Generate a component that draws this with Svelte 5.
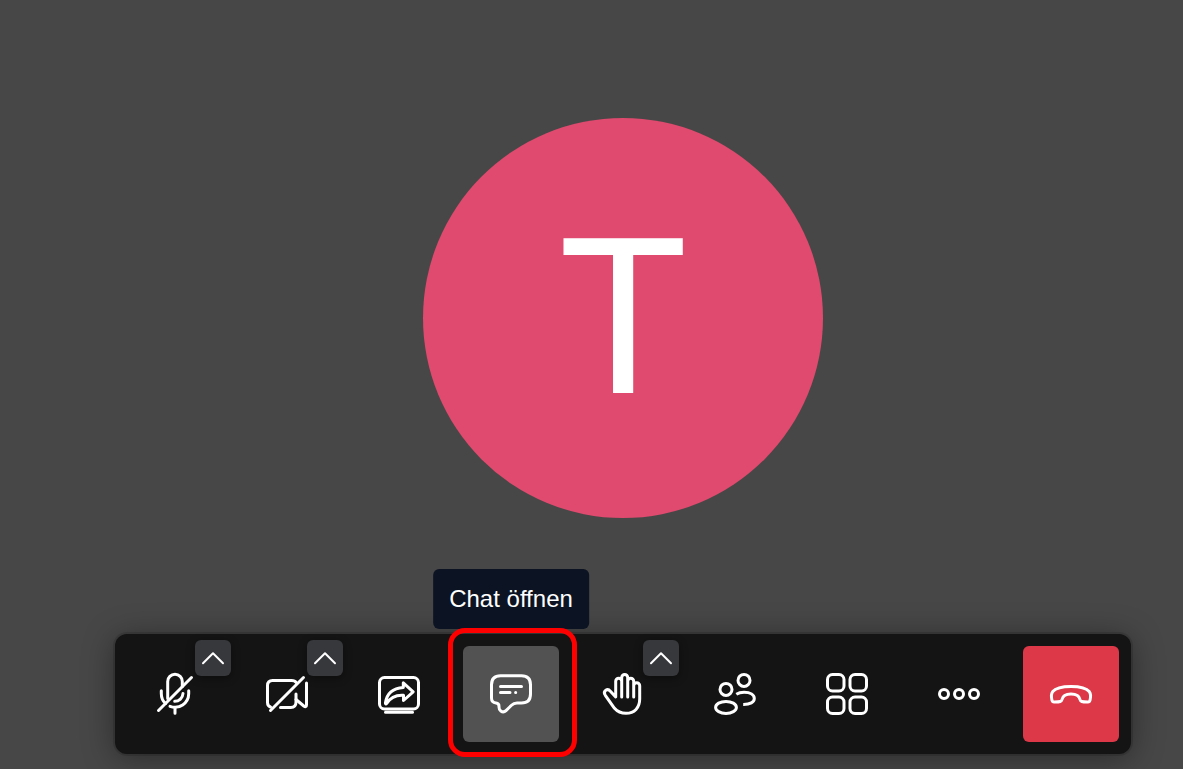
<script>
  const controls = [
    { id: 'mic', label: 'Mikrofon', menu: true },
    { id: 'camera', label: 'Kamera', menu: true },
    { id: 'share', label: 'Bildschirm teilen' },
    { id: 'chat', label: 'Chat öffnen', active: true },
    { id: 'hand', label: 'Hand heben', menu: true },
    { id: 'people', label: 'Teilnehmer' },
    { id: 'grid', label: 'Ansicht' },
    { id: 'more', label: 'Mehr' },
    { id: 'hangup', label: 'Auflegen', danger: true }
  ];
</script>

<main class="call">
  <section class="stage">
    <div class="avatar">T</div>
  </section>

  <nav class="toolbar">
    {#each controls as c (c.id)}
      <div class="slot">
        <button class="control" class:active={c.active} class:danger={c.danger} aria-label={c.label}>
          <svg class="icon" viewBox="0 0 48 48" aria-hidden="true">
            {#if c.id === 'mic'}
              <path d="M16.700 28.500V11.500a7.300 7.300 0 0 1 14.600 0V16.500" />
              <path d="M32 23.500a8.300 8.300 0 0 1-8.300 7.800" />
              <path d="M10.300 20.800v2.700c0 4.200 1.600 7.800 4.300 10" />
              <path d="M37.700 20.800v2.900A13.700 13.700 0 0 1 19 36.300" />
              <path d="M24 38v5.300M7.500 40.500 40.500 7.500" />
            {:else if c.id === 'camera'}
              <path d="M7.500 37C5.500 36.300 4.500 34.700 4.500 32.500V15.500c0-3.500 1.700-5.100 5.100-5.100h19c2.400 0 3.700.7 4.500 2.100" />
              <path d="M33 24v8c0 3.800-1.500 5.400-5.200 5.400H17.500" />
              <path d="M33 29.500 40.800 36c1.500 1.100 2.700.8 2.700-1V13" />
              <path d="M7.500 40.500 40.500 7.500" />
            {:else if c.id === 'share'}
              <rect x="4.500" y="7.500" width="39" height="31.500" rx="5" />
              <path d="M28.300 12.800 38.200 21.800 28.500 30.500v-5.200c-7.500-.5-13 2-17 8.300-.5.600-1.200.400-1.100-.600C11.700 24 17.500 18.200 28.300 17.500Z" />
              <path d="M10.500 42.300h27" />
            {:else if c.id === 'chat'}
              <path d="M13.500 5.700h21c6 0 9 3 9 9v9.300c0 6-3 9-9 9h-4.500c-2.500 0-3.800.6-5.500 2.300l-5.500 5.300c-1.600 1.500-3.500 1.600-5.200.4-1.700-1.200-1.900-2.400-1.800-4.500.1-2.200-.500-3.200-3-3.500-3-.3-4.500-2-4.500-5V14.700c0-6 3-9 9-9Z" />
              <path d="M13.500 16.400h21M13.500 22.400h9.500M28.600 22.400h.1" />
            {:else if c.id === 'hand'}
              <path d="M16.700 27V11.300a3 3 0 0 1 6 0V27V7.500a3 3 0 0 1 6 0V27V11.300a3 3 0 0 1 6 0V27V15.700a3 3 0 0 1 6 0V29c0 8.700-5.300 14.300-13.700 14.300-4.800 0-8.700-1.800-11.500-5L6.300 25.300c-1.300-2-1.100-4 .5-5.100 1.500-1 3.200-.7 4.600 1.100Z" />
            {:else if c.id === 'people'}
              <circle cx="15" cy="19.400" r="6" />
              <ellipse cx="15" cy="37.400" rx="10.400" ry="6" />
              <circle cx="33" cy="10.400" r="6" />
              <path class="butt" d="M25.300 24.300c2.200-1.400 4.700-2 7.800-2 6.200 0 10.200 2.500 10.200 6.200s-4.200 6.100-11.100 6" />
            {:else if c.id === 'grid'}
              <rect x="4.500" y="4.500" width="16.500" height="16.500" rx="5" />
              <rect x="27" y="4.500" width="16.500" height="16.500" rx="5" />
              <rect x="4.500" y="27" width="16.500" height="16.500" rx="5" />
              <rect x="27" y="27" width="16.500" height="16.500" rx="5" />
            {:else if c.id === 'more'}
              <circle cx="9" cy="24" r="4.500" />
              <circle cx="24" cy="24" r="4.500" />
              <circle cx="39" cy="24" r="4.500" />
            {:else}
              <path d="M24 16.400c9.200 0 15.500 1.700 18.200 5.100 1.700 2.100 1.600 5.500.8 8.800-.3 1.400-1 1.900-2.400 1.800-5.900-.2-7.100-.6-7.600-2.600C32.300 26 29.500 24 24 24s-8.300 2-9 5.500c-.500 2-1.700 2.400-7.600 2.600-1.400.1-2.100-.400-2.400-1.800-.800-3.300-.900-6.700.8-8.800 2.700-3.400 9-5.100 18.200-5.100Z" />
            {/if}
          </svg>
        </button>
        {#if c.menu}
          <button class="expand" aria-label={`${c.label}: Optionen`}>
            <svg viewBox="0 0 36 36" aria-hidden="true"><path d="M8 23.200 18 13.200 28 23.200" /></svg>
          </button>
        {/if}
        {#if c.active}
          <span class="tooltip" role="tooltip">{c.label}</span>
          <span class="ring"></span>
        {/if}
      </div>
    {/each}
  </nav>
</main>

<style>
  :global(body) {
    background: #474747;
  }
  .call {
    box-sizing: border-box;
    min-height: 100vh;
    padding: 118px 0 15px 63px;
    display: flex;
    flex-direction: column;
    align-items: center;
    justify-content: space-between;
    gap: 48px;
    font-family: 'Liberation Sans', Arial, sans-serif;
    color: #fff;
  }
  .avatar {
    width: 400px;
    height: 400px;
    border-radius: 50%;
    background: #df4a6e;
    font-family: Roboto, sans-serif;
    font-size: 217px;
    line-height: 402px;
    text-align: center;
  }
  .toolbar {
    display: flex;
    gap: 16px;
    padding: 12px;
    border-radius: 12px;
    background: #141414;
    box-shadow: 0 0 0 2px rgba(0, 0, 0, 0.12), 0 4px 32px rgba(0, 0, 0, 0.4);
  }
  .slot {
    position: relative;
  }
  button {
    border: 0;
    padding: 0;
    color: inherit;
    cursor: pointer;
    display: grid;
    place-items: center;
  }
  .control {
    width: 96px;
    height: 96px;
    border-radius: 6px;
    background: transparent;
  }
  .active {
    background: #525252;
  }
  .danger {
    background: #dd3848;
  }
  svg {
    display: block;
    fill: none;
    stroke: #fff;
    stroke-linecap: round;
    stroke-linejoin: round;
  }
  .icon {
    width: 48px;
    height: 48px;
    stroke-width: 3px;
  }
  .butt {
    stroke-linecap: butt;
  }
  .expand {
    position: absolute;
    top: -6px;
    right: -8px;
    width: 36px;
    height: 36px;
    border-radius: 6px;
    background: #37383c;
    box-shadow: 0 2px 8px rgba(0, 0, 0, 0.4);
  }
  .expand svg {
    width: 36px;
    height: 36px;
    stroke-width: 2px;
  }
  .tooltip {
    position: absolute;
    bottom: calc(100% + 17px);
    left: 50%;
    transform: translateX(-50%);
    padding: 16px;
    border-radius: 6px;
    background: #0c1322;
    font-size: 24px;
    line-height: 28px;
    white-space: nowrap;
  }
  .ring {
    position: absolute;
    inset: -18px -18px -15px -15px;
    border: 5px solid #f00;
    border-radius: 17px;
    pointer-events: none;
  }
</style>
